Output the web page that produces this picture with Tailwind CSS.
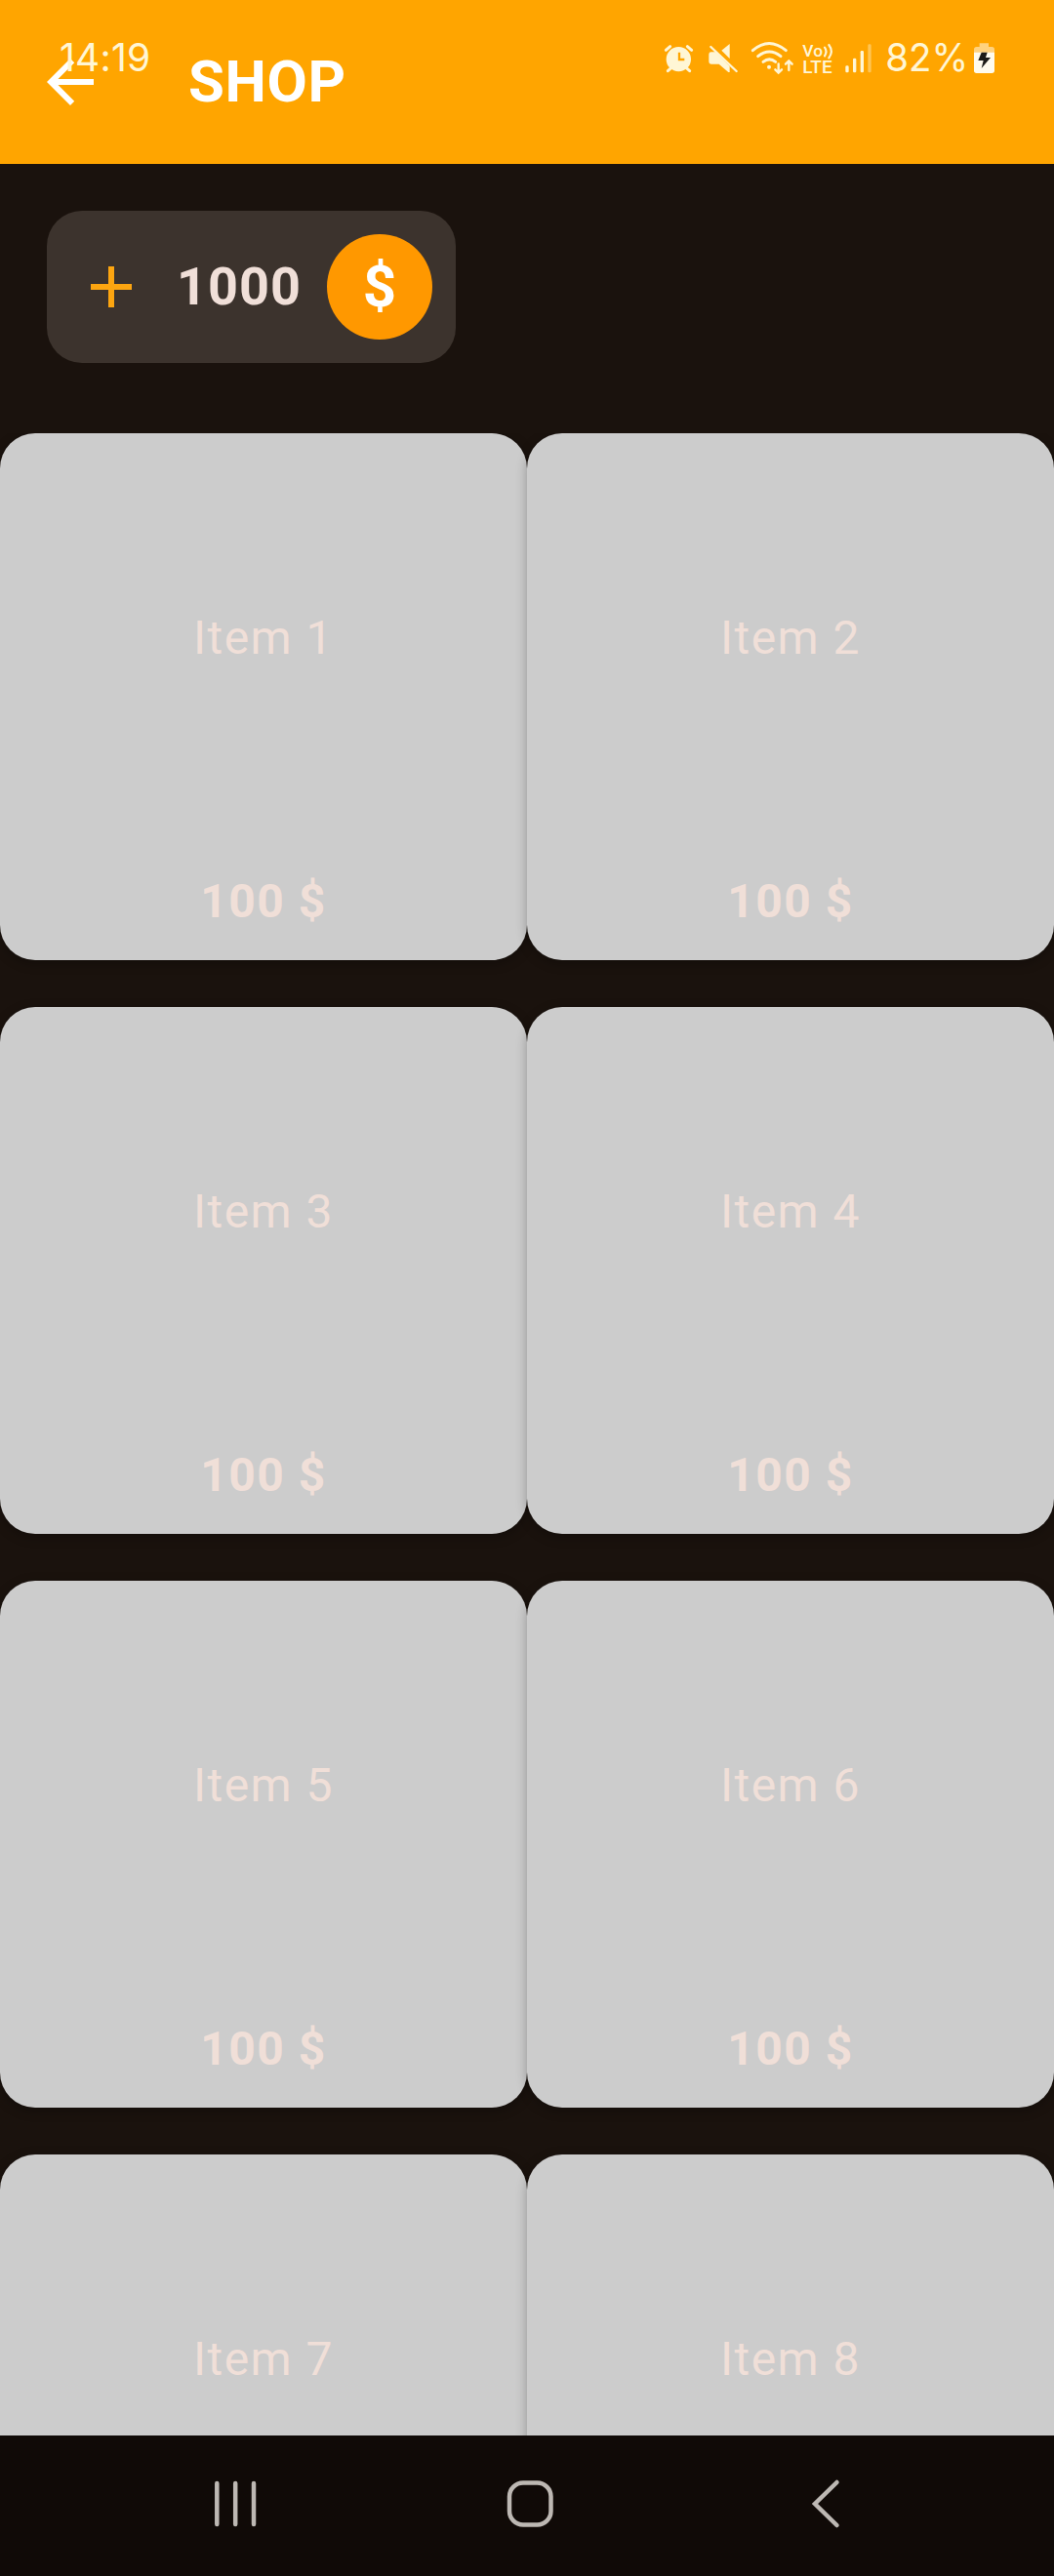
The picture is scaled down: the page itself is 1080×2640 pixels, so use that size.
<!DOCTYPE html>
<html lang="en">
<head>
<meta charset="utf-8">
<title>Shop</title>
<script src="https://cdn.jsdelivr.net/npm/@tailwindcss/browser@4"></script>
</head>
<body class="w-[1080px] h-[2640px] overflow-hidden bg-[#1a120d] font-[Roboto,sans-serif]">
<div class="relative flex h-[2640px] w-[1080px] flex-col overflow-hidden">

  <!-- App bar -->
  <header class="flex h-[168px] shrink-0 items-center gap-[85px] bg-[#ffa500] pl-9 text-white">
    <svg class="size-[72px]" viewBox="0 0 24 24" fill="currentColor"><path d="M20 11H7.83l5.59-5.59L12 4l-8 8 8 8 1.41-1.41L7.83 13H20v-2z"/></svg>
    <h1 class="text-[60px] leading-[72px] font-bold tracking-[0.600px]">SHOP</h1>
  </header>

  <!-- System status bar, drawn over the app bar -->
  <div class="absolute left-0 top-5 flex h-20 w-full text-[#fff6d5]">
    <div class="w-[660px] pl-[61px] pt-[15px] font-[Inter,sans-serif] text-[39px] leading-[48px] tracking-[0.200px]">14:19</div>
    <svg class="h-20 w-[190px] shrink-0 overflow-visible" viewBox="0 0 570 240" fill="currentColor" stroke="currentColor" stroke-linecap="round">
      <g>
        <circle cx="106" cy="122" r="38" stroke="none"/>
        <path d="M67 94L80 83M133 83l13 11M84 148l-11 10M129 148l11 10" stroke-width="9" fill="none"/>
        <path d="M108 101v22h16" stroke="#ffa500" stroke-width="7" fill="none" stroke-linecap="butt"/>
      </g>
      <g stroke="none">
        <path d="M263 75v45l-25-25z"/>
        <path d="M199 107q0-7 7-7h13l44 44v18h-4l-29-25h-24q-7 0-7-7z"/>
        <path d="M205 84l79 75" stroke="currentColor" stroke-width="7"/>
      </g>
      <g fill="none" stroke-width="9">
        <path d="M334 95q50-43 102 0M350 113q35-28 70 0M366 130q19-15 38 0"/>
        <circle cx="384" cy="146" r="6" stroke="none" fill="currentColor"/>
        <path d="M413 136v28M403 154l10 10 10-10M445 156v-28M435 137l10-10 10 10" stroke-width="7"/>
      </g>
      <g stroke="none" class="font-[Roboto,sans-serif] font-medium">
        <text x="487" y="114" font-size="49" textLength="62" lengthAdjust="spacingAndGlyphs">Vo</text>
        <text x="487" y="166" font-size="53" textLength="91" lengthAdjust="spacingAndGlyphs">LTE</text>
      </g>
      <path d="M555 86q9 12 0 26M568 78q15 20 0 40" fill="none" stroke-width="6.500"/>
    </svg>
    <svg class="h-20 w-[200px] shrink-0" viewBox="0 0 600 240" fill="currentColor">
      <rect x="49" y="142" width="10" height="21" rx="4"/>
      <rect x="72" y="119" width="10" height="44" rx="4"/>
      <rect x="95" y="96" width="10" height="67" rx="4"/>
      <rect x="118" y="76" width="10" height="87" rx="4" opacity=".4"/>
      <text x="172" y="160" font-size="119" textLength="255" lengthAdjust="spacingAndGlyphs" class="font-[Inter,sans-serif]">82%</text>
      <path d="M461 73h28v11h10q8 0 8 8v10h-63V92q0-8 8-8h9z" fill="#ffd27f"/>
      <path d="M444 101h63v56q0 8-8 8h-47q-8 0-8-8z" fill="#fffbee"/>
      <path d="M467 101h18l-5 16h15l-28 33 6-24h-16z" fill="#1c1b18"/>
    </svg>
  </div>

  <!-- Balance -->
  <section class="shrink-0 px-12 pt-12 pb-[72px]">
    <div class="flex h-[156px] w-[419px] items-center rounded-[36px] bg-[#3c332d] pr-6 pl-[30px]">
      <svg class="size-[72px] shrink-0 text-[#fca510]" viewBox="0 0 24 24" fill="currentColor"><path d="M19 13h-6v6h-2v-6H5v-2h6V5h2v6h6z"/></svg>
      <span class="flex-1 pl-[31px] text-[54px] leading-[72px] font-bold tracking-[1px] text-[#f0dfd8]">1000</span>
      <span class="flex size-[108px] shrink-0 items-center justify-center rounded-full bg-[#ff9800] text-[60px] leading-[72px] font-bold text-white">$</span>
    </div>
  </section>

  <!-- Items -->
  <main id="grid" class="grid min-h-0 flex-1 auto-rows-[540px] grid-cols-2 content-start gap-y-12 overflow-hidden text-5xl leading-[72px] tracking-[1.500px] text-[#f0dfd8]"></main>

  <!-- Navigation bar -->
  <nav class="relative flex h-36 shrink-0 items-start bg-[#100a07] pt-[42px] text-[#bdb8b3]">
    <svg class="ml-[210px] h-14 w-[60px]" viewBox="0 0 60 56" fill="none" stroke="currentColor" stroke-width="4.500" stroke-linecap="round"><path d="M12.300 7v42M31.200 7v42M50 7v42"/></svg>
    <svg class="ml-[242px] h-14 w-[60px]" viewBox="0 0 60 56" fill="none" stroke="currentColor" stroke-width="4.500"><rect x="10" y="6.500" width="42.500" height="43" rx="14"/></svg>
    <svg class="ml-[248px] h-14 w-[60px]" viewBox="0 0 60 56" fill="none" stroke="currentColor" stroke-width="4.500" stroke-linecap="round"><path d="M37.500 6L15 28l22.500 22"/></svg>
  </nav>
</div>
<script>
  document.getElementById('grid').innerHTML = Array.from({ length: 8 }, (_, i) => `
    <article class="flex flex-col items-center justify-between rounded-[36px] bg-[#cccccc] pt-[174px] pb-6 shadow-[0_3px_12px_rgba(0,0,0,0.28)]">
      <span>Item ${i + 1}</span>
      ${i < 6 ? '<span class="font-bold">100 $</span>' : ''}
    </article>`).join('');
</script>
</body>
</html>
